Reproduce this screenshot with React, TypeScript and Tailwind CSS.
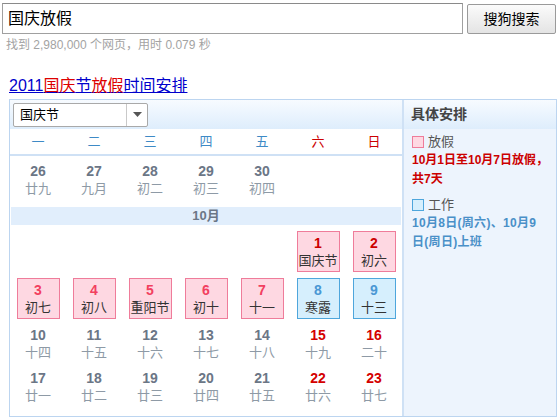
import React from 'react'

type Day = {
  n: number
  lunar: string
  kind?: 'rest' | 'work'
  weekend?: boolean
}

const FONT = { fontFamily: '"Liberation Sans", Arial, "Noto Sans CJK SC", sans-serif' }

const weekdays = ['一', '二', '三', '四', '五', '六', '日']

const september: (Day | null)[] = [
  { n: 26, lunar: '廿九' },
  { n: 27, lunar: '九月' },
  { n: 28, lunar: '初二' },
  { n: 29, lunar: '初三' },
  { n: 30, lunar: '初四' },
  null,
  null,
]

const october: (Day | null)[][] = [
  [
    null,
    null,
    null,
    null,
    null,
    { n: 1, lunar: '国庆节', kind: 'rest', weekend: true },
    { n: 2, lunar: '初六', kind: 'rest', weekend: true },
  ],
  [
    { n: 3, lunar: '初七', kind: 'rest' },
    { n: 4, lunar: '初八', kind: 'rest' },
    { n: 5, lunar: '重阳节', kind: 'rest' },
    { n: 6, lunar: '初十', kind: 'rest' },
    { n: 7, lunar: '十一', kind: 'rest' },
    { n: 8, lunar: '寒露', kind: 'work' },
    { n: 9, lunar: '十三', kind: 'work' },
  ],
  [
    { n: 10, lunar: '十四' },
    { n: 11, lunar: '十五' },
    { n: 12, lunar: '十六' },
    { n: 13, lunar: '十七' },
    { n: 14, lunar: '十八' },
    { n: 15, lunar: '十九', weekend: true },
    { n: 16, lunar: '二十', weekend: true },
  ],
  [
    { n: 17, lunar: '廿一' },
    { n: 18, lunar: '廿二' },
    { n: 19, lunar: '廿三' },
    { n: 20, lunar: '廿四' },
    { n: 21, lunar: '廿五' },
    { n: 22, lunar: '廿六', weekend: true },
    { n: 23, lunar: '廿七', weekend: true },
  ],
]

function DayCell({ day }: { day: Day | null }) {
  if (!day) {
    return <div className="h-[41px] w-[43px]" />
  }

  let box = 'border-transparent'
  let numColor = day.weekend ? 'text-[#d40000]' : 'text-[#6b7686]'
  let lunarColor = 'text-[#8e9aa6]'

  if (day.kind === 'rest') {
    box = 'border-[#ef7c9a] bg-[#fed8e2]'
    numColor = day.weekend ? 'text-[#cc0000]' : 'text-[#f2405f]'
    lunarColor = 'text-[#333333]'
  } else if (day.kind === 'work') {
    box = 'border-[#4ea6dc] bg-[#d6effd]'
    numColor = 'text-[#4a98d4]'
    lunarColor = 'text-[#333333]'
  }

  return (
    <div className={`flex h-[41px] w-[43px] flex-col items-center border pt-[2px] ${box}`}>
      <span className={`text-[14px] font-bold leading-[18px] ${numColor}`}>{day.n}</span>
      <span className={`text-[13px] leading-[18px] ${lunarColor}`}>{day.lunar}</span>
    </div>
  )
}

function WeekRow({ days, height }: { days: (Day | null)[]; height: string }) {
  return (
    <div className={`grid grid-cols-7 ${height}`}>
      {days.map((day, i) => (
        <div key={i} className="flex justify-center">
          <DayCell day={day} />
        </div>
      ))}
    </div>
  )
}

export default function App() {
  return (
    <div className="h-[417px] w-[558px] overflow-hidden bg-white" style={FONT}>
      <div className="flex items-start pl-[2px] pt-[3px]">
        <div className="flex h-[31px] w-[461px] items-center border border-[#a0a0a0] border-t-[#8a8a8a] bg-white pl-[5px] text-[16px] text-black">
          国庆放假
        </div>
        <button
          type="button"
          className="ml-[4px] mt-[1px] h-[30px] w-[89px] rounded-[2px] border border-[#9a9a9a] bg-gradient-to-b from-[#fbfbfb] to-[#e4e4e4] text-[14px] text-black"
        >
          搜狗搜索
        </button>
      </div>

      <div className="mt-[3px] pl-[6px] text-[12px] leading-[16px] text-[#a3a3a3]">
        找到 2,980,000 个网页，用时 0.079 秒
      </div>

      <div className="mt-[23px] pl-[9px] text-[16px] leading-[20px]">
        <a href="#" className="text-[#0000cc] underline">
          2011<span className="text-[#dd0000]">国庆</span>节<span className="text-[#dd0000]">放假</span>时间安排
        </a>
      </div>

      <div className="ml-[9px] mt-[3px] flex h-[318px] w-[548px] border border-[#bcd5f0]">
        <div className="flex w-[392px] flex-col">
          <div className="flex h-[29px] items-center bg-gradient-to-b from-[#f7fbff] to-[#deedfc] pl-[3px]">
            <div className="flex h-[24px] w-[135px] items-center rounded-[2px] border border-[#a9a9a9] bg-white">
              <span className="flex-1 pl-[6px] text-[13px] text-black">国庆节</span>
              <span className="flex h-full w-[21px] items-center justify-center border-l border-[#c9c9c9]">
                <svg width="9" height="5" viewBox="0 0 9 5">
                  <path d="M0 0 H9 L4.5 5 Z" fill="#555" />
                </svg>
              </span>
            </div>
          </div>

          <div className="grid h-[27px] grid-cols-7 items-center border-b-2 border-[#cfe1f5] bg-white">
            {weekdays.map((w, i) => (
              <div
                key={w}
                className={`text-center text-[13px] ${i >= 5 ? 'text-[#cc0000]' : 'text-[#3e8ac6]'}`}
              >
                {w}
              </div>
            ))}
          </div>

          <div className="pt-[3px]">
            <WeekRow days={september} height="h-[46px]" />
          </div>

          <div className="mx-[1px] mt-[2px] flex h-[18px] items-center justify-center bg-[#e1eefc] text-[13px] font-bold text-[#6b7686]">
            10月
          </div>

          <div className="pt-[6px]">
            <WeekRow days={october[0]} height="h-[47px]" />
            <WeekRow days={october[1]} height="h-[45px]" />
            <WeekRow days={october[2]} height="h-[43px]" />
            <WeekRow days={october[3]} height="h-[43px]" />
          </div>
        </div>

        <div className="flex flex-1 flex-col border-l-2 border-[#cfe1f5] bg-[#edf4fd]">
          <div className="flex h-[29px] items-center bg-gradient-to-b from-[#f7fbff] to-[#deedfc] pl-[7px] text-[14px] font-bold text-[#444]">
            具体安排
          </div>
          <div className="pl-[8px] pt-[4px]">
            <div className="flex items-center gap-[4px] text-[13px] leading-[18px] text-[#555]">
              <span className="h-[12px] w-[12px] border border-[#ef7c9a] bg-[#fed8e2]" />
              放假
            </div>
            <div className="text-[12px] font-bold leading-[19px] text-[#cc0000]">
              10月1日至10月7日放假，
              <br />
              共7天
            </div>
            <div className="mt-[7px] flex items-center gap-[4px] text-[13px] leading-[18px] text-[#555]">
              <span className="h-[12px] w-[12px] border border-[#4ea6dc] bg-[#d6effd]" />
              工作
            </div>
            <div className="text-[12px] font-bold leading-[19px] tracking-[0.3px] text-[#4a90c8]">
              10月8日(周六)、10月9
              <br />
              日(周日)上班
            </div>
          </div>
        </div>
      </div>
    </div>
  )
}
